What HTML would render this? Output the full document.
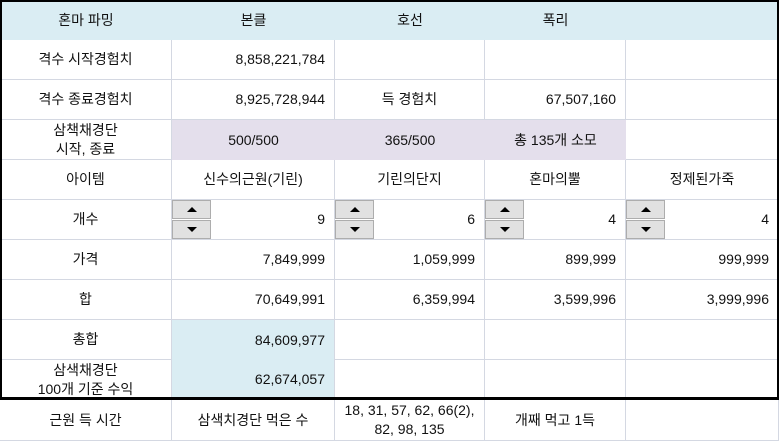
<!DOCTYPE html>
<html><head><meta charset="utf-8"><style>
*{margin:0;padding:0;box-sizing:border-box}
body{width:779px;height:441px;overflow:hidden;background:#fff;position:relative;font-family:"Liberation Sans","Noto Sans CJK KR",sans-serif;font-size:14px;color:#111}
.c{position:absolute;display:flex;align-items:center;justify-content:center;text-align:center;line-height:19px;border-right:1px solid #d4d8e2;border-bottom:1px solid #d4d8e2;white-space:nowrap}
.r{justify-content:flex-end;padding-right:9px}
.sp{position:absolute;width:39px;height:19px;background:#e1e1e1;border:1px solid #adadad}
.sp::after{content:"";position:absolute;left:14px;top:6px;border-left:5px solid transparent;border-right:5px solid transparent}
.u::after{border-bottom:5px solid #000}
.d::after{border-top:5px solid #000}
</style></head><body>
<div class="c" style="left:0;top:0;width:779px;height:40px;background:#daedf3;border:none"></div>
<div class="c" style="left:0;top:0;width:172px;height:40px;border:none">혼마 파밍</div>
<div class="c" style="left:172px;top:0;width:163px;height:40px;border:none">본클</div>
<div class="c" style="left:335px;top:0;width:150px;height:40px;border:none">호선</div>
<div class="c" style="left:485px;top:0;width:141px;height:40px;border:none">폭리</div>

<div class="c" style="left:0;top:40px;width:172px;height:40px">격수 시작경험치</div>
<div class="c r" style="left:172px;top:40px;width:163px;height:40px">8,858,221,784</div>
<div class="c" style="left:335px;top:40px;width:150px;height:40px"></div>
<div class="c" style="left:485px;top:40px;width:141px;height:40px"></div>
<div class="c" style="left:626px;top:40px;width:153px;height:40px"></div>

<div class="c" style="left:0;top:80px;width:172px;height:40px">격수 종료경험치</div>
<div class="c r" style="left:172px;top:80px;width:163px;height:40px">8,925,728,944</div>
<div class="c" style="left:335px;top:80px;width:150px;height:40px">득 경험치</div>
<div class="c r" style="left:485px;top:80px;width:141px;height:40px">67,507,160</div>
<div class="c" style="left:626px;top:80px;width:153px;height:40px"></div>

<div class="c" style="left:0;top:120px;width:172px;height:40px">삼책채경단<br>시작, 종료</div>
<div class="c" style="left:172px;top:120px;width:454px;height:40px;background:#e4dfec;border:none"></div>
<div class="c" style="left:172px;top:120px;width:163px;height:40px;border:none">500/500</div>
<div class="c" style="left:335px;top:120px;width:150px;height:40px;border:none">365/500</div>
<div class="c" style="left:485px;top:120px;width:141px;height:40px;border:none">총 135개 소모</div>
<div class="c" style="left:626px;top:120px;width:153px;height:40px"></div>

<div class="c" style="left:0;top:160px;width:172px;height:40px">아이템</div>
<div class="c" style="left:172px;top:160px;width:163px;height:40px">신수의근원(기린)</div>
<div class="c" style="left:335px;top:160px;width:150px;height:40px">기린의단지</div>
<div class="c" style="left:485px;top:160px;width:141px;height:40px">혼마의뿔</div>
<div class="c" style="left:626px;top:160px;width:153px;height:40px">정제된가죽</div>

<div class="c" style="left:0;top:200px;width:172px;height:40px">개수</div>
<div class="c r" style="left:172px;top:200px;width:163px;height:40px">9</div>
<div class="c r" style="left:335px;top:200px;width:150px;height:40px">6</div>
<div class="c r" style="left:485px;top:200px;width:141px;height:40px">4</div>
<div class="c r" style="left:626px;top:200px;width:153px;height:40px">4</div>
<div class="sp u" style="left:172px;top:200px"></div><div class="sp d" style="left:172px;top:220px"></div>
<div class="sp u" style="left:335px;top:200px"></div><div class="sp d" style="left:335px;top:220px"></div>
<div class="sp u" style="left:485px;top:200px"></div><div class="sp d" style="left:485px;top:220px"></div>
<div class="sp u" style="left:626px;top:200px"></div><div class="sp d" style="left:626px;top:220px"></div>

<div class="c" style="left:0;top:240px;width:172px;height:40px">가격</div>
<div class="c r" style="left:172px;top:240px;width:163px;height:40px">7,849,999</div>
<div class="c r" style="left:335px;top:240px;width:150px;height:40px">1,059,999</div>
<div class="c r" style="left:485px;top:240px;width:141px;height:40px">899,999</div>
<div class="c r" style="left:626px;top:240px;width:153px;height:40px">999,999</div>

<div class="c" style="left:0;top:280px;width:172px;height:40px">합</div>
<div class="c r" style="left:172px;top:280px;width:163px;height:40px">70,649,991</div>
<div class="c r" style="left:335px;top:280px;width:150px;height:40px">6,359,994</div>
<div class="c r" style="left:485px;top:280px;width:141px;height:40px">3,599,996</div>
<div class="c r" style="left:626px;top:280px;width:153px;height:40px">3,999,996</div>

<div class="c" style="left:0;top:320px;width:172px;height:40px">총합</div>
<div class="c r" style="left:172px;top:320px;width:163px;height:40px;background:#daedf3;border-bottom:none">84,609,977</div>
<div class="c" style="left:335px;top:320px;width:150px;height:40px"></div>
<div class="c" style="left:485px;top:320px;width:141px;height:40px"></div>
<div class="c" style="left:626px;top:320px;width:153px;height:40px"></div>

<div class="c" style="left:0;top:360px;width:172px;height:40px;align-items:flex-start;padding-top:1px;overflow:hidden">삼색채경단<br>100개 기준 수익</div>
<div class="c r" style="left:172px;top:360px;width:163px;height:40px;background:#daedf3">62,674,057</div>
<div class="c" style="left:335px;top:360px;width:150px;height:40px"></div>
<div class="c" style="left:485px;top:360px;width:141px;height:40px"></div>
<div class="c" style="left:626px;top:360px;width:153px;height:40px"></div>

<div class="c" style="left:0;top:400px;width:172px;height:41px">근원 득 시간</div>
<div class="c" style="left:172px;top:400px;width:163px;height:41px">삼색치경단 먹은 수</div>
<div class="c" style="left:335px;top:400px;width:150px;height:41px;align-items:flex-start;padding-top:1px">18, 31, 57, 62, 66(2),<br>82, 98, 135</div>
<div class="c" style="left:485px;top:400px;width:141px;height:41px">개째 먹고 1득</div>
<div class="c" style="left:626px;top:400px;width:153px;height:41px"></div>

<div style="position:absolute;left:0;top:0;width:779px;height:400px;border:2px solid #000;border-bottom:3px solid #000;pointer-events:none"></div>
</body></html>
